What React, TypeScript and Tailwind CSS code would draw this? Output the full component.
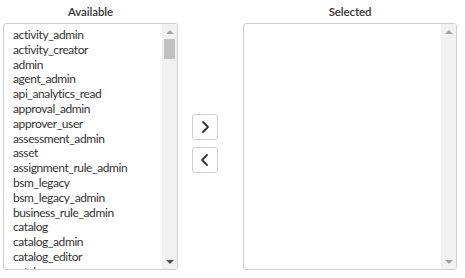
const available = [
  "activity_admin",
  "activity_creator",
  "admin",
  "agent_admin",
  "api_analytics_read",
  "approval_admin",
  "approver_user",
  "assessment_admin",
  "asset",
  "assignment_rule_admin",
  "bsm_legacy",
  "bsm_legacy_admin",
  "business_rule_admin",
  "catalog",
  "catalog_admin",
  "catalog_editor",
  "catalog_manager",
];

function Scrollbar({ thumb }: { thumb: boolean }) {
  return (
    <div className="flex w-[15px] shrink-0 flex-col items-center bg-[#f1f1f1]">
      <div className="flex h-[15px] w-full items-center justify-center">
        <div className="h-0 w-0 border-x-[4px] border-b-[4px] border-x-transparent border-b-[#a3a3a3]" />
      </div>
      {thumb && <div className="h-[20px] w-[11px] bg-[#c1c1c1]" />}
      <div className="flex-1" />
      <div className="flex h-[15px] w-full items-center justify-center">
        <div className={`h-0 w-0 border-x-[4px] border-t-[4px] border-x-transparent ${thumb ? "border-t-[#505050]" : "border-t-[#a3a3a3]"}`} />
      </div>
    </div>
  );
}

function Chevron({ dir }: { dir: "left" | "right" }) {
  return (
    <svg width="10" height="14" viewBox="0 0 10 14" fill="none">
      <path
        d={dir === "right" ? "M3 2l5 5-5 5" : "M7 2L2 7l5 5"}
        stroke="#2b3440"
        strokeWidth="1.8"
        strokeLinecap="round"
        strokeLinejoin="round"
      />
    </svg>
  );
}

export default function App() {
  return (
    <div className="flex h-[278px] w-[465px] bg-white pt-[4px] font-['Lato',sans-serif] text-[#333]">
      <div className="ml-[3px] flex w-[175px] flex-col">
        <div className="h-[19px] text-center text-[11.5px] font-semibold leading-[16px] tracking-[-0.1px]">Available</div>
        <div className="flex h-[247px] overflow-hidden rounded-[3px] border border-[#cfcfcf]">
          <ul className="flex-1 overflow-hidden pl-[9px] pt-[4px] text-[12px] leading-[14.8px] tracking-[-0.4px]">
            {available.map((name) => (
              <li key={name} className="whitespace-nowrap">{name}</li>
            ))}
          </ul>
          <Scrollbar thumb />
        </div>
      </div>

      <div className="ml-[14px] flex flex-col gap-[7px] pt-[110px]">
        <button className="flex h-[26px] w-[26px] items-center justify-center rounded-[3px] border border-[#cfcfcf] bg-white">
          <Chevron dir="right" />
        </button>
        <button className="flex h-[26px] w-[26px] items-center justify-center rounded-[3px] border border-[#cfcfcf] bg-white">
          <Chevron dir="left" />
        </button>
      </div>

      <div className="ml-[25px] flex w-[214px] flex-col">
        <div className="h-[19px] text-center text-[11.5px] font-semibold leading-[16px] tracking-[-0.1px]">Selected</div>
        <div className="flex h-[247px] overflow-hidden rounded-[3px] border border-[#cfcfcf]">
          <div className="flex-1" />
          <Scrollbar thumb={false} />
        </div>
      </div>
    </div>
  );
}
